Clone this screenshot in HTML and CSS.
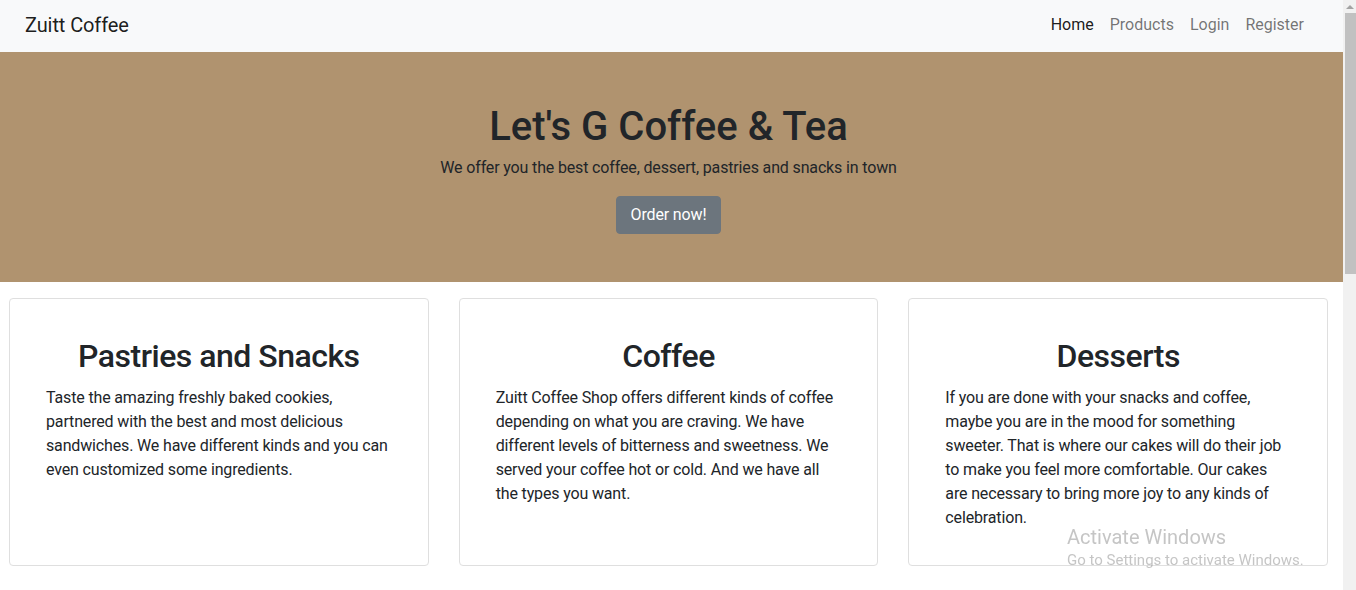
FILE: index.html
```html
<!DOCTYPE html>
<html lang="en">
<head>
<meta charset="utf-8">
<title>Zuitt Coffee</title>
<link rel="stylesheet" href="styles.css">
</head>
<body>
<div class="window">
  <div class="page">
    <nav class="navbar">
      <a class="brand" href="#">Zuitt Coffee</a>
      <ul class="nav-links">
        <li><a class="nav-link active" href="#">Home</a></li>
        <li><a class="nav-link" href="#">Products</a></li>
        <li><a class="nav-link" href="#">Login</a></li>
        <li><a class="nav-link" href="#">Register</a></li>
      </ul>
    </nav>
    <section class="hero">
      <h1 class="hero-title">Let's G Coffee &amp; Tea</h1>
      <p class="hero-text">We offer you the best coffee, dessert, pastries and snacks in town</p>
      <a class="btn" href="#">Order now!</a>
    </section>
    <section class="cards">
      <article class="card">
        <h2 class="card-title">Pastries and Snacks</h2>
        <p class="card-text">Taste the amazing freshly baked cookies, partnered with the best and most delicious sandwiches. We have different kinds and you can even customized some ingredients.</p>
      </article>
      <article class="card">
        <h2 class="card-title">Coffee</h2>
        <p class="card-text">Zuitt Coffee Shop offers different kinds of coffee depending on what you are craving. We have different levels of bitterness and sweetness. We served your coffee hot or cold. And we have all the types you want.</p>
      </article>
      <article class="card">
        <h2 class="card-title">Desserts</h2>
        <p class="card-text">If you are done with your snacks and coffee, maybe you are in the mood for something sweeter. That is where our cakes will do their job to make you feel more comfortable. Our cakes are necessary to bring more joy to any kinds of celebration.</p>
      </article>
    </section>
  </div>
  <div class="scrollbar">
    <div class="scroll-arrow"></div>
    <div class="scroll-thumb"></div>
  </div>
</div>
<div class="watermark">
  <div class="wm-title">Activate Windows</div>
  <div class="wm-sub">Go to Settings to activate Windows.</div>
</div>
</body>
</html>
```

FILE: styles.css
```css
* { box-sizing: border-box; }
html, body { margin: 0; padding: 0; height: 100%; overflow: hidden; }
body {
  font-family: "Segoe UI", Roboto, "Liberation Sans", Arial, sans-serif;
  font-size: 16px;
  line-height: 1.5;
  letter-spacing: -0.15px;
  color: #212529;
  background: #fff;
}
a { text-decoration: none; }
.window { display: flex; height: 590px; }
.page { flex: 1; min-width: 0; }

.navbar {
  height: 52px;
  background: #f8f9fa;
  display: flex;
  align-items: center;
  justify-content: space-between;
  padding: 0 39px 0 25px;
}
.brand { font-size: 20px; color: rgba(0,0,0,.9); line-height: 30px; letter-spacing: -0.1px; margin-top: -2px; }
.nav-links { list-style: none; margin: -2px 0 0; padding: 0; display: flex; gap: 16px; }
.nav-link { color: rgba(0,0,0,.55); font-size: 16px; letter-spacing: 0; }
.nav-link.active { color: rgba(0,0,0,.9); }

.hero {
  background: #b0936f;
  padding: 48px 22px 48px 16px;
  text-align: center;
}
.hero-title { margin: 0 0 8px; font-size: 40px; font-weight: 500; line-height: 48px; padding-top: 3px; height: 48px; letter-spacing: 0; }
.hero-text { margin: 0 0 16px; }
.btn {
  display: inline-block;
  background: #6c757d;
  color: #fff;
  padding: 6px 14px;
  border-radius: 4px;
  line-height: 24px;
  border: 1px solid #6c757d;
}

.cards {
  display: flex;
  gap: 30px;
  padding: 16px 15px 0 9px;
}
.card {
  flex: 1;
  border: 1px solid #dfdfdf;
  border-radius: 4px;
  padding: 36px;
  height: 268px;
}
.card-title { margin: 0 0 13px; font-size: 32px; font-weight: 500; line-height: 38px; padding-top: 2px; height: 38px; text-align: center; letter-spacing: -0.5px; }
.card-text { margin: 0; line-height: 24px; }

.scrollbar { width: 13px; background: #f1f1f1; display: flex; flex-direction: column; align-items: flex-end; }
.scroll-arrow {
  margin: 5px 2px 4px 0;
  width: 0; height: 0;
  border-left: 4px solid transparent;
  border-right: 4px solid transparent;
  border-bottom: 4px solid #a3a3a3;
}
.scroll-thumb { width: 11px; height: 261px; background: #c1c1c1; }

.watermark {
  position: fixed;
  left: 1067px;
  top: 524px;
  color: rgba(140,140,140,.5);
  pointer-events: none;
  letter-spacing: 0;
}
.wm-title { font-size: 20px; line-height: 26px; }
.wm-sub { font-size: 15px; line-height: 20px; }
```
